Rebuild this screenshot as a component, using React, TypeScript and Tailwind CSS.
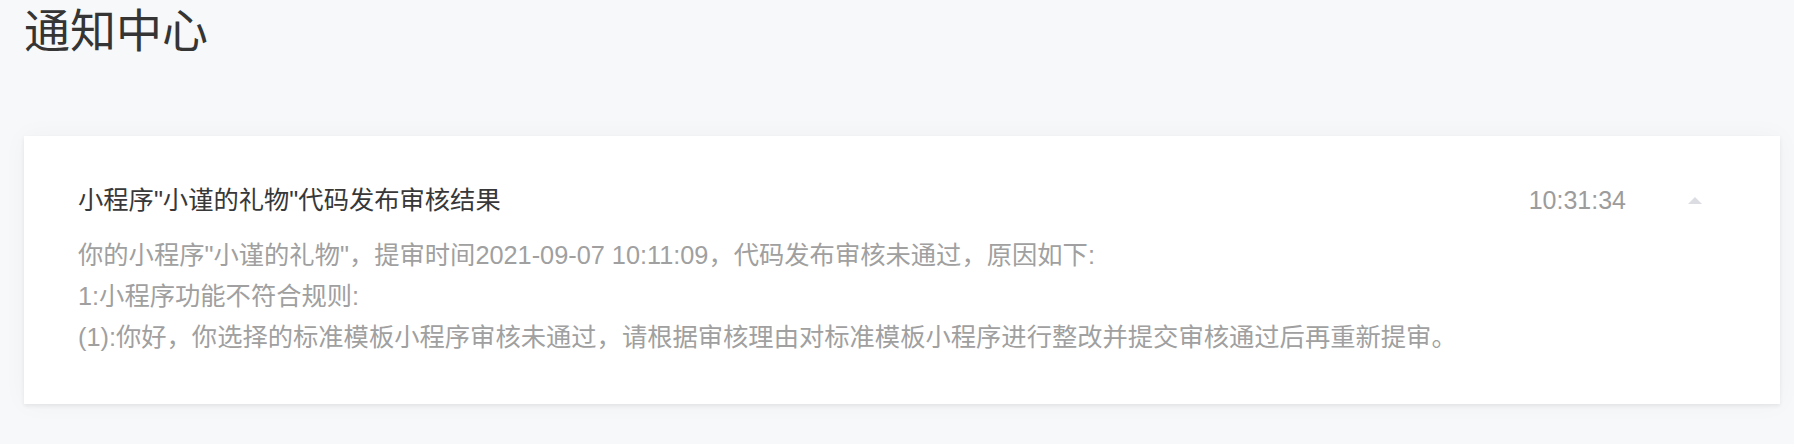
import React from "react";

const FONT = {
  fontFamily:
    '"Liberation Sans", "Noto Sans CJK SC", "Noto Sans", sans-serif',
};

export default function App() {
  return (
    <div
      className="w-[1794px] h-[444px] bg-[#f7f8fa] overflow-hidden flex flex-col"
      style={FONT}
    >
      <h1 className="pl-[24px] text-[46px] leading-[62px] text-[#353535] font-normal">
        通知中心
      </h1>
      <div className="mt-[74px] ml-[24px] mr-[14px] h-[268px] bg-white shadow-[0_2px_4px_rgba(0,0,0,0.07),0_0_24px_rgba(0,0,0,0.035)] pl-[54px] pr-[78px] pt-[44px]">
        <div className="flex items-center">
          <div className="flex-1 text-[25.3px] leading-[41px] text-[#383838]">
            小程序"小谨的礼物"代码发布审核结果
          </div>
          <div className="text-[25px] leading-[41px] text-[#9c9c9c]">10:31:34</div>
          <div className="ml-[62px] w-[14px] flex items-center justify-center">
            <svg width="14" height="7" viewBox="0 0 14 7">
              <path d="M0 7 L7 0 L14 7 Z" fill="#dcdde3" />
            </svg>
          </div>
        </div>
        <div className="mt-[14px] text-[25.3px] leading-[41px] text-[#a0a0a0]">
          <p>你的小程序"小谨的礼物"，提审时间2021-09-07 10:11:09，代码发布审核未通过，原因如下:</p>
          <p>1:小程序功能不符合规则:</p>
          <p>(1):你好，你选择的标准模板小程序审核未通过，请根据审核理由对标准模板小程序进行整改并提交审核通过后再重新提审。</p>
        </div>
      </div>
    </div>
  );
}
